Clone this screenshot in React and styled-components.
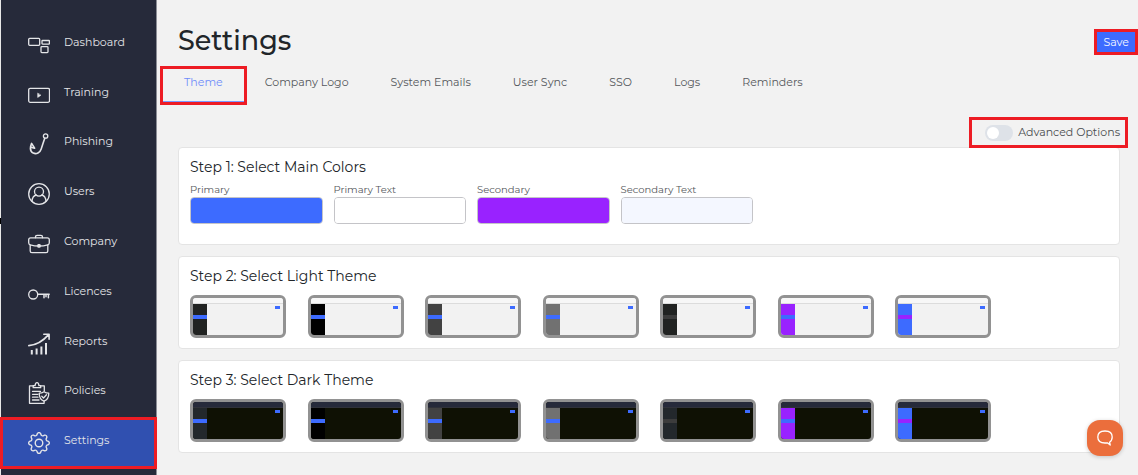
import React, { useState } from 'react';
import styled, { createGlobalStyle } from 'styled-components';
import { BsGear } from 'react-icons/bs';

const GlobalStyle = createGlobalStyle`
  * {
    box-sizing: border-box;
  }
  body {
    margin: 0;
    background: #f2f2f2;
    color: #212529;
    font-family: Montserrat, Inter, 'Open Sans', sans-serif;
  }
  button, input {
    font-family: inherit;
  }
`

const Page = styled.div`
  display: flex;
  min-height: 100vh;
  border-left: 1px solid #e8e8e8;
`

const EdgeMark = styled.span`
  position: absolute;
  left: 0;
  top: 218px;
  width: 1px;
  height: 6px;
  background: #000;
`

const Sidebar = styled.nav`
  display: grid;
  grid-auto-rows: 1fr;
  flex: 0 0 156px;
  padding: 20px 0 7px;
  background: #262a3a;
  border-right: 1px solid #8c8e96;
`

const NavLink = styled.a`
  display: flex;
  align-items: center;
  gap: 14px;
  padding-left: 27px;
  color: #e4e5e8;
  font-size: 11px;
  text-decoration: none;
  background: ${props => props.$active ? '#3050b0' : 'transparent'};
  outline: ${props => props.$active ? '3px solid #ed1c24' : 'none'};
  outline-offset: -2px;

  svg {
    flex: none;
    width: 22px;
    height: 22px;
  }

  span {
    padding-bottom: 6px;
  }
`

const Content = styled.main`
  flex: 1;
  min-width: 0;
  padding-left: 21px;
`

const Header = styled.header`
  display: flex;
  justify-content: space-between;
  align-items: center;
  padding: 23px 3px 0 0;
`

const Title = styled.h1`
  margin: 0;
  font-size: 27px;
  line-height: 36px;
  font-weight: 500;
`

const SaveButton = styled.button`
  padding: 0 6px;
  border: 0;
  background: #3d6bff;
  color: #f4f7ff;
  font-size: 11px;
  line-height: 20px;
  margin-top: 2px;
  outline: 3px solid #ed1c24;
`

const Tabs = styled.div`
  display: flex;
  margin-left: -15px;
  padding-top: 10px;
`

const Tab = styled.button`
  padding: 0 21px 5px;
  border: 0;
  border-bottom: 1px solid ${props => props.$active ? '#7b9aff' : 'transparent'};
  background: transparent;
  color: ${props => props.$active ? '#6f8dfa' : '#55585c'};
  font-size: 11px;
  line-height: 27px;
  outline: ${props => props.$active ? '3px solid #ed1c24' : 'none'};
  white-space: nowrap;
`

const Body = styled.div`
  display: flex;
  flex-direction: column;
  gap: 11px;
  padding-right: 18px;
`

const Options = styled.div`
  display: flex;
  justify-content: flex-end;
  padding-top: 18px;
  margin: 0 -5px -9px 0;
`

const Advanced = styled.label`
  position: relative;
  z-index: 1;
  display: flex;
  align-items: center;
  gap: 5px;
  padding: 0 5px 0 13px;
  color: #4a4d50;
  font-size: 11px;
  line-height: 25px;
  outline: 3px solid #ed1c24;
`

const Switch = styled.input`
  appearance: none;
  width: 28px;
  height: 16px;
  margin: 0;
  padding: 2px;
  border-radius: 8px;
  background: ${props => props.checked ? '#3d6bff' : '#dee2e8'};

  &::before {
    content: '';
    display: block;
    width: 12px;
    height: 12px;
    margin-left: ${props => props.checked ? '12px' : '0'};
    border-radius: 50%;
    background: #fff;
  }
`

const Card = styled.section`
  padding: 11px 11px ${props => props.$roomy ? '20px' : '10px'};
  border: 1px solid #e4e4e4;
  border-radius: 4px;
  background: #fff;
`

const CardTitle = styled.h2`
  margin: 0;
  font-size: 14px;
  line-height: 16px;
  font-weight: 400;
`

const ColorRow = styled.div`
  display: grid;
  grid-template-columns: repeat(4, 1fr);
  gap: 11px;
  max-width: 563px;
  padding-top: 8px;
`

const ColorField = styled.label`
  display: flex;
  flex-direction: column;
  color: #55585c;
  font-size: 10px;
  line-height: 14px;
`

const ColorInput = styled.input`
  appearance: none;
  width: 100%;
  height: 27px;
  padding: 0;
  border: 1px solid #c4c4c8;
  border-radius: 4px;
  background: transparent;
  overflow: hidden;

  &::-webkit-color-swatch-wrapper {
    padding: 0;
  }
  &::-webkit-color-swatch {
    border: 0;
  }
`

const ThemeRow = styled.div`
  display: flex;
  justify-content: space-between;
  max-width: 801px;
  padding-top: 11px;
`

const ThemeButton = styled.button`
  display: grid;
  grid-template: 6px 1fr / 14px 1fr;
  width: 96px;
  height: 43px;
  padding: 0;
  border: 3px solid #929292;
  border-radius: 6px;
  background: ${props => props.$dark ? '#0f1104' : '#f2f2f2'};
  overflow: hidden;
`

const MiniBar = styled.span`
  grid-column: 1 / 3;
  background: ${props => props.$dark ? '#262a3a' : '#f7f7f7'};
  border-bottom: 1px solid ${props => props.$dark ? '#30323a' : '#dcdcdc'};
`

const MiniMenu = styled.span`
  display: block;
  padding-top: 11px;
  background: ${props => props.$color};

  &::before {
    content: '';
    display: block;
    height: 4px;
    background: ${props => props.$accent};
  }
`

const MiniSave = styled.span`
  justify-self: end;
  width: 5px;
  height: 3px;
  margin: 2px 3px 0 0;
  background: #3d6bff;
`

const ChatButton = styled.button`
  position: fixed;
  right: 15px;
  bottom: 19px;
  display: grid;
  place-items: center;
  width: 36px;
  height: 36px;
  padding: 0;
  border: 0;
  border-radius: 13px;
  background: #eb6e3c;
  box-shadow: 0 1px 4px rgba(0, 0, 0, 0.2);
`

const Icon = ({ children }) => (
  <svg viewBox="0 0 22 22" fill="none" stroke="currentColor" strokeWidth="1.3" strokeLinecap="round" strokeLinejoin="round" aria-hidden="true">
    {children}
  </svg>
)

const navItems = [
  {
    name: 'Dashboard',
    icon: <Icon>
      <rect x="0.7" y="4.3" width="11" height="7" rx="1" />
      <rect x="14" y="6.5" width="7.4" height="3.6" rx="0.5" />
      <rect x="13" y="12.6" width="7" height="6" rx="0.8" />
    </Icon>
  },
  {
    name: 'Training',
    icon: <Icon>
      <rect x="0.7" y="4.3" width="20.8" height="14" rx="1.5" />
      <path d="M9.7 9.400v4l3-2z" fill="currentColor" strokeWidth="0.6" />
    </Icon>
  },
  {
    name: 'Phishing',
    icon: <Icon>
      <circle cx="17.6" cy="3" r="2.2" />
      <path d="M16.8 5.3C15.400 9 14.400 12.500 13.200 16c-1.200 3.800-4.800 5.500-7.900 4.100C2 18.500 1.900 14.600 3.600 10.400l3 4.800-2.800-.8" strokeWidth="1.6" />
    </Icon>
  },
  {
    name: 'Users',
    icon: <Icon>
      <circle cx="11" cy="11" r="10.3" />
      <circle cx="11" cy="8.6" r="4.5" />
      <path d="M4 18.400c.2-3.600 2-5.900 4.300-6.400M18 18.400c-.2-3.600-2-5.900-4.300-6.400" />
    </Icon>
  },
  {
    name: 'Company',
    icon: <Icon>
      <path d="M7.500 4.700V4c0-1 .6-1.600 1.600-1.600h3.800c1 0 1.600.6 1.600 1.600v.7" />
      <path d="M2.200 11.800C1.200 11.500.7 10.800.7 9.800V6.800c0-1.200.8-2 2-2h16.600c1.200 0 2 .8 2 2v3c0 1-.5 1.700-1.500 2-5.800 1.600-11.800 1.600-17.600 0z" />
      <path d="M2.200 11.800v6.200c0 1 .7 1.700 1.700 1.700h14.200c1 0 1.700-.7 1.700-1.700v-6.200" />
      <rect x="9.900" y="11.600" width="2.200" height="2.400" rx="0.600" fill="currentColor" />
    </Icon>
  },
  {
    name: 'Licences',
    icon: <Icon>
      <circle cx="5.200" cy="11.500" r="4.500" />
      <path d="M9.800 11.200H21.200M16 11.400v3.300M18 11.400v2.300M20.400 11.400v3.300" strokeWidth="1.500" />
    </Icon>
  },
  {
    name: 'Reports',
    icon: <Icon>
      <path d="M.8 12.600C8.500 12 14.500 8.600 20.600 1.600M15.800 1.200h5.300v5" strokeWidth="1.600" />
      <path d="M3.800 17v4.600M8.600 15.500v6.100M13.400 13.500v8.100M18 10v11.600" strokeWidth="2" strokeLinecap="butt" />
    </Icon>
  },
  {
    name: 'Policies',
    icon: <Icon>
      <path d="M5.200 3.800H1.500v17.500h14.600v-1.800M16.300 9V3.800h-3.600" />
      <path d="M5.200 5.700V3.600h1.900C7.200 1.900 7.800.7 9 .7s1.800 1.200 1.900 2.900h1.800v2.100z" />
      <path d="M4.500 9.400h8M4.500 12.300h5.500M4.500 15.200h5.500M4.500 18h6.500" />
      <path d="M16 9.800c1.500 1 3 1.400 4.800 1.400 0 4-1 6.500-4.800 8-3.800-1.500-4.800-4-4.800-8 1.800 0 3.300-.4 4.800-1.400z" />
      <path d="M13.800 14.200l1.700 1.800 3-3.200" />
    </Icon>
  },
  { name: 'Settings', icon: <BsGear aria-hidden="true" /> }
]

const tabs = ['Theme', 'Company Logo', 'System Emails', 'User Sync', 'SSO', 'Logs', 'Reminders']

const mainColors = [
  { name: 'Primary', value: '#3d6bff' },
  { name: 'Primary Text', value: '#ffffff' },
  { name: 'Secondary', value: '#9922ff' },
  { name: 'Secondary Text', value: '#f4f7ff' }
]

const lightThemes = [
  { color: '#212322', accent: '#3d6bff' },
  { color: '#000000', accent: '#3d6bff' },
  { color: '#424242', accent: '#3d6bff' },
  { color: '#717171', accent: '#3d6bff' },
  { color: '#212322', accent: '#3c3c3c' },
  { color: '#9922ff', accent: '#3d6bff' },
  { color: '#3d6bff', accent: '#9922ff' }
]

const darkThemes = lightThemes.map(theme => (
  theme.color === '#212322' ? { ...theme, color: '#23282c' } : theme
))

const ThemePicker = ({ themes, dark }) => (
  <ThemeRow>
    {themes.map((theme, i) => (
      <ThemeButton key={i} type="button" $dark={dark} aria-label={`${dark ? 'Dark' : 'Light'} Theme ${i + 1}`}>
        <MiniBar $dark={dark} />
        <MiniMenu $color={theme.color} $accent={theme.accent} />
        <MiniSave />
      </ThemeButton>
    ))}
  </ThemeRow>
)

const App = () => {
  const [activeTab, setActiveTab] = useState('Theme')
  const [advanced, setAdvanced] = useState(false)

  return (
    <Page>
      <GlobalStyle />
      <EdgeMark />
      <Sidebar>
        {navItems.map(item => (
          <NavLink key={item.name} href="#" $active={item.name === 'Settings'}>
            {item.icon}
            <span>{item.name}</span>
          </NavLink>
        ))}
      </Sidebar>

      <Content>
        <Header>
          <Title>Settings</Title>
          <SaveButton type="button">Save</SaveButton>
        </Header>

        <Tabs role="tablist">
          {tabs.map(tab => (
            <Tab
              key={tab}
              type="button"
              role="tab"
              aria-selected={tab === activeTab}
              $active={tab === activeTab}
              onClick={() => setActiveTab(tab)}>
              {tab}
            </Tab>
          ))}
        </Tabs>

        <Body>
          <Options>
            <Advanced>
              <Switch type="checkbox" role="switch" checked={advanced} onChange={e => setAdvanced(e.target.checked)} />
              Advanced Options
            </Advanced>
          </Options>

          <Card $roomy>
            <CardTitle>Step 1: Select Main Colors</CardTitle>
            <ColorRow>
              {mainColors.map(color => (
                <ColorField key={color.name}>
                  {color.name}
                  <ColorInput type="color" defaultValue={color.value} />
                </ColorField>
              ))}
            </ColorRow>
          </Card>

          <Card>
            <CardTitle>Step 2: Select Light Theme</CardTitle>
            <ThemePicker themes={lightThemes} />
          </Card>

          <Card>
            <CardTitle>Step 3: Select Dark Theme</CardTitle>
            <ThemePicker themes={darkThemes} dark />
          </Card>
        </Body>
      </Content>

      <ChatButton type="button" aria-label="Chat">
        <svg width="18" height="18" viewBox="0 0 18 18" fill="none" stroke="#fff" strokeWidth="1.3" strokeLinejoin="round" aria-hidden="true">
          <path d="M13.600 13.200c1.900-1.300 2.600-2.700 2.600-5.200 0-4.300-2-6-7.200-6s-7.200 1.700-7.200 6 2 6 7.200 6c.9 0 1.700 0 2.400-.2l2.800 2.200z" />
        </svg>
      </ChatButton>
    </Page>
  )
}

export default App
